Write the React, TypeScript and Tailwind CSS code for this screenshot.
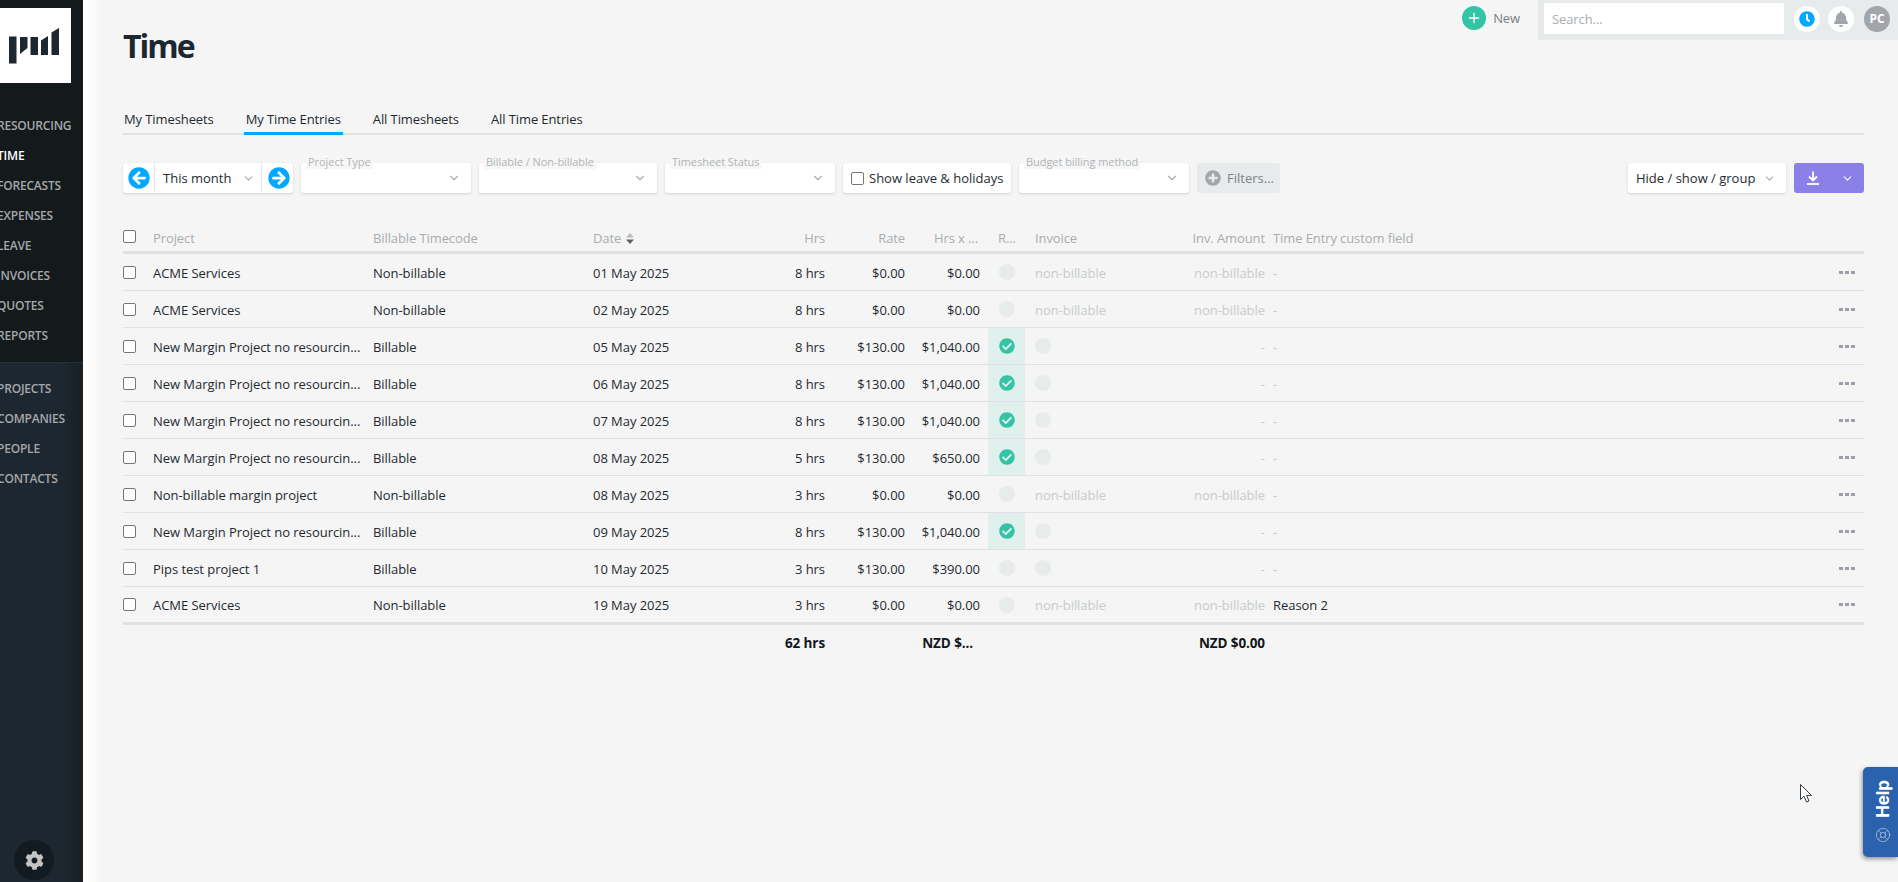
import { ChevronDown, LifeBuoy, Plus } from "lucide-react";
import { FaArrowCircleLeft, FaArrowCircleRight, FaBell, FaCheckCircle, FaClock, FaCog, FaPlusCircle } from "react-icons/fa";

const NAV_TOP = ["Resourcing", "Time", "Forecasts", "Expenses", "Leave", "Invoices", "Quotes", "Reports"];
const NAV_BOTTOM = ["Projects", "Companies", "People", "Contacts"];
const TABS = ["My Timesheets", "My Time Entries", "All Timesheets", "All Time Entries"];

const COLS = "grid grid-cols-[30px_220px_220px_161px_71px_80px_83px_37px_140px_108px_1fr_30px] items-center";

type Entry = { project: string; code: string; date: string; hrs: string; rate: string; total: string; approved?: boolean; custom?: string };

const LONG = "New Margin Project no resourcin...";
const ENTRIES: Entry[] = [
  { project: "ACME Services", code: "Non-billable", date: "01 May 2025", hrs: "8 hrs", rate: "$0.00", total: "$0.00" },
  { project: "ACME Services", code: "Non-billable", date: "02 May 2025", hrs: "8 hrs", rate: "$0.00", total: "$0.00" },
  { project: LONG, code: "Billable", date: "05 May 2025", hrs: "8 hrs", rate: "$130.00", total: "$1,040.00", approved: true },
  { project: LONG, code: "Billable", date: "06 May 2025", hrs: "8 hrs", rate: "$130.00", total: "$1,040.00", approved: true },
  { project: LONG, code: "Billable", date: "07 May 2025", hrs: "8 hrs", rate: "$130.00", total: "$1,040.00", approved: true },
  { project: LONG, code: "Billable", date: "08 May 2025", hrs: "5 hrs", rate: "$130.00", total: "$650.00", approved: true },
  { project: "Non-billable margin project", code: "Non-billable", date: "08 May 2025", hrs: "3 hrs", rate: "$0.00", total: "$0.00" },
  { project: LONG, code: "Billable", date: "09 May 2025", hrs: "8 hrs", rate: "$130.00", total: "$1,040.00", approved: true },
  { project: "Pips test project 1", code: "Billable", date: "10 May 2025", hrs: "3 hrs", rate: "$130.00", total: "$390.00" },
  { project: "ACME Services", code: "Non-billable", date: "19 May 2025", hrs: "3 hrs", rate: "$0.00", total: "$0.00", custom: "Reason 2" },
];

function Checkbox() {
  return <input type="checkbox" className="h-[13px] w-[13px] appearance-none rounded-[2px] border border-[#767676] bg-white" />;
}

function Circle() {
  return <span className="block h-4 w-4 rounded-full bg-[#e8ebec]" />;
}

function FilterSelect({ label, width }: { label: string; width: string }) {
  return (
    <div className={`relative flex h-[30px] items-center justify-end rounded-[3px] bg-white pr-[10px] shadow-[0_1px_3px_rgba(0,0,0,0.14)] ${width}`}>
      <span className="absolute left-[5px] top-[-8px] bg-[#f6f6f6] px-[2px] text-[11px] leading-[14px] tracking-[-0.05px] text-[#b0b4b7]">{label}</span>
      <ChevronDown className="h-[14px] w-[14px] text-[#a9adb0]" />
    </div>
  );
}

function Logo() {
  return (
    <svg viewBox="0 0 71 75" className="h-[75px] w-[71px]" fill="#1c2730">
      <rect x="9" y="28.5" width="7.5" height="27" />
      <polygon points="20,29 27.5,29 27.5,40 20,46" />
      <rect x="30.5" y="29" width="7.5" height="18" />
      <polygon points="41,32.5 48,28 48,47 41,47" />
      <polygon points="51.5,24.5 59,20 59,47 51.5,47" />
    </svg>
  );
}

function Row({ entry, last }: { entry: Entry; last: boolean }) {
  const nb = entry.code === "Non-billable";
  return (
    <div className={`${COLS} ${last ? "h-[38px] border-b-[3px]" : "h-[37px] border-b"} border-[#e0e1e1] tracking-[-0.05px] text-[#1f2a30]`}>
      <div className="flex items-center"><Checkbox /></div>
      <div className="truncate pr-[4px] pt-[3px]">{entry.project}</div>
      <div className="pt-[3px]">{entry.code}</div>
      <div className="pt-[3px]">{entry.date}</div>
      <div className="pt-[3px] text-right">{entry.hrs}</div>
      <div className="pt-[3px] text-right">{entry.rate}</div>
      <div className="pr-2 pt-[3px] text-right">{entry.total}</div>
      <div className={`flex h-full items-center justify-center ${entry.approved ? "bg-[#e0f0ec]" : ""}`}>
        {entry.approved ? <FaCheckCircle className="h-4 w-4 text-[#33c3a5]" /> : <Circle />}
      </div>
      <div className={`pl-[10px] text-[#c8cccc] ${nb ? "pt-[3px]" : ""}`}>{nb ? "non-billable" : <Circle />}</div>
      <div className="pr-2 pt-[3px] text-right text-[#c8cccc]">{nb ? "non-billable" : "-"}</div>
      <div className={`pt-[3px] ${entry.custom ? "" : "text-[#c8cccc]"}`}>{entry.custom ?? "-"}</div>
      <div className="flex justify-end gap-[2px] pr-[9px]">
        <span className="h-[3px] w-[4px] bg-[#9aa0a6]" />
        <span className="h-[3px] w-[4px] bg-[#9aa0a6]" />
        <span className="h-[3px] w-[4px] bg-[#9aa0a6]" />
      </div>
    </div>
  );
}

export default function App() {
  return (
    <div className="relative flex h-[882px] w-full overflow-hidden bg-[#f5f5f5] text-[13px] tracking-[-0.1px] text-[#1f2a30] [font-family:'Open_Sans',sans-serif]">
      {/* Sidebar */}
      <aside className="flex w-[83px] shrink-0 flex-col overflow-hidden bg-[linear-gradient(to_right,#1c2730_75%,#1a2024)]">
        <div className="h-[362px] bg-[#14191c] pt-2">
          <div className="w-[71px] bg-white"><Logo /></div>
          <nav className="mt-[28px] flex flex-col">
            {NAV_TOP.map((n) => (
              <span key={n} className={`-ml-[3px] h-[30px] whitespace-nowrap text-[12px] font-semibold uppercase leading-[30px] tracking-[-0.2px] ${n === "Time" ? "text-white" : "text-[#a5a8aa]"}`}>{n}</span>
            ))}
          </nav>
        </div>
        <nav className="flex flex-1 flex-col border-t border-[#232f38] pt-[11px]">
          {NAV_BOTTOM.map((n) => (
            <span key={n} className="-ml-[3px] h-[30px] whitespace-nowrap text-[12px] font-semibold uppercase leading-[30px] tracking-[-0.2px] text-[#a5a8aa]">{n}</span>
          ))}
          <div className="mb-[2px] ml-[14px] mt-auto flex h-10 w-10 items-center justify-center rounded-full bg-[#141b20]">
            <FaCog className="h-[19px] w-[19px] text-[#c4c4c4]" />
          </div>
        </nav>
      </aside>

      {/* Main */}
      <main className="min-w-0 flex-1 bg-[linear-gradient(to_right,#fff,#f5f5f5_20px)] pl-10 pr-[34px]">
        <header className="flex h-[68px] items-start justify-between">
          <h1 className="pt-[24px] text-[32px] font-bold leading-[44px] tracking-[-2px] text-[#1c2730]">Time</h1>
          <div className="-mr-[34px] flex items-start">
            <div className="mr-[18px] flex h-10 items-center gap-[7px] pb-[4px]">
              <span className="flex h-6 w-6 items-center justify-center rounded-full bg-[#33c3a5]"><Plus className="h-4 w-4 text-white" /></span>
              <span className="pt-[2px] text-[#7a8085]">New</span>
            </div>
            <div className="flex h-10 w-[360px] items-center bg-[#e8ebec] pb-[3px] pl-[6px]">
              <div className="flex h-[31px] w-[240px] items-center bg-white px-2 pt-[2px] text-[#a9adb0]">Search...</div>
              <span className="ml-[10px] flex h-[26px] w-[26px] items-center justify-center rounded-full bg-white"><FaClock className="h-4 w-4 text-[#00a9ff]" /></span>
              <span className="ml-2 flex h-[26px] w-[26px] items-center justify-center rounded-full bg-white"><FaBell className="h-4 w-4 text-[#a2a5aa]" /></span>
              <span className="ml-[10px] flex h-[26px] w-[26px] items-center justify-center rounded-full bg-[#a2a5aa] text-[12px] font-bold text-white">PC</span>
            </div>
          </div>
        </header>

        {/* Tabs */}
        <div className="mt-[37px] h-[30px] border-b-2 border-[#e0e1e1]">
          <div className="-ml-[1px] flex gap-[28px]">
            {TABS.map((t) => (
              <div key={t} className={`h-[30px] px-[2px] leading-[28px] ${t === "My Time Entries" ? "border-b-[3px] border-[#00a9ff]" : ""}`}>{t}</div>
            ))}
          </div>
        </div>

        {/* Filters */}
        <div className="mt-[28px] flex items-center gap-2 tracking-normal">
          <div className="flex h-[30px] w-[170px] items-center rounded-[3px] bg-white shadow-[0_1px_3px_rgba(0,0,0,0.14)]">
            <div className="flex h-full w-[32px] items-center justify-center border-r border-[#e8e8e8]"><FaArrowCircleLeft className="h-[22px] w-[22px] text-[#00a9ff]" /></div>
            <div className="flex h-full w-[107px] items-center justify-between border-r border-[#e8e8e8] pl-[8px] pr-[6px]">
              <span className="pt-[2px]">This month</span>
              <ChevronDown className="h-[13px] w-[13px] text-[#a9adb0]" />
            </div>
            <div className="flex h-full flex-1 items-center justify-center pl-[2px]"><FaArrowCircleRight className="h-[22px] w-[22px] text-[#00a9ff]" /></div>
          </div>
          <FilterSelect label="Project Type" width="w-[170px]" />
          <FilterSelect label="Billable / Non-billable" width="w-[178px]" />
          <FilterSelect label="Timesheet Status" width="w-[170px]" />
          <div className="flex h-[30px] w-[168px] items-center gap-[5px] rounded-[3px] bg-white pl-2 shadow-[0_1px_3px_rgba(0,0,0,0.14)]">
            <Checkbox />
            <span className="whitespace-nowrap pt-[2px]">Show leave &amp; holidays</span>
          </div>
          <FilterSelect label="Budget billing method" width="w-[170px]" />
          <div className="flex h-[30px] w-[83px] items-center gap-[6px] rounded-[3px] bg-[#e8ebec] pl-2 text-[#7c8286]">
            <FaPlusCircle className="h-4 w-4 text-[#a2a5aa]" />
            <span className="pt-[2px]">Filters...</span>
          </div>
          <div className="ml-auto flex h-[30px] w-[158px] items-center justify-between rounded-[3px] bg-white pl-2 pr-[10px] shadow-[0_1px_3px_rgba(0,0,0,0.14)]">
            <span className="whitespace-nowrap pt-[2px]">Hide / show / group</span>
            <ChevronDown className="h-[13px] w-[13px] text-[#a9adb0]" />
          </div>
          <div className="flex h-[30px] w-[70px] items-center justify-between rounded-[3px] bg-[#8b80e8] pl-[13px] pr-[10px] text-white">
            <svg viewBox="0 0 12 14" className="h-[14px] w-3" fill="none" stroke="currentColor" strokeWidth="1.8">
              <path d="M6 0.5V9M2 5.5L6 9.5L10 5.5" />
              <path d="M0 13H12" />
            </svg>
            <ChevronDown className="h-[13px] w-[13px]" />
          </div>
        </div>

        {/* Table */}
        <div className={`${COLS} mt-[29px] h-[32px] border-b-[3px] border-[#e0e1e1] text-[#a9adb0]`}>
          <div className="flex items-center"><Checkbox /></div>
          <div className="pt-[4px]">Project</div>
          <div className="pt-[4px]">Billable Timecode</div>
          <div className="flex items-center gap-[5px] pt-[4px]">
            Date
            <svg viewBox="0 0 8 11" className="h-[11px] w-2"><path d="M4 0L8 4.5H0Z" fill="#b8bcbe" /><path d="M4 11L8 6.5H0Z" fill="#5c6368" /></svg>
          </div>
          <div className="pt-[4px] text-right">Hrs</div>
          <div className="pt-[4px] text-right">Rate</div>
          <div className="pr-[10px] pt-[4px] text-right">Hrs x ...</div>
          <div className="pl-[10px] pt-[4px]">R...</div>
          <div className="pl-[10px] pt-[4px]">Invoice</div>
          <div className="whitespace-nowrap pr-2 pt-[4px] text-right">Inv. Amount</div>
          <div className="pt-[4px]">Time Entry custom field</div>
          <div />
        </div>
        {ENTRIES.map((e, i) => <Row key={i} entry={e} last={i === ENTRIES.length - 1} />)}
        <div className={`${COLS} h-[37px] text-[13.5px] font-bold text-[#12181c]`}>
          <div /><div /><div /><div />
          <div className="text-right">62 hrs</div>
          <div />
          <div className="pr-[15px] text-right">NZD $...</div>
          <div /><div />
          <div className="whitespace-nowrap pr-2 text-right">NZD $0.00</div>
        </div>
      </main>

      {/* Help tab */}
      <div className="absolute right-0 top-[767px] flex h-[90px] w-[35px] flex-col items-center justify-end gap-[9px] rounded-l-[5px] bg-[#2a62ad] pb-[14px] pl-[5px] text-white shadow-[-1px_2px_4px_rgba(0,0,0,0.4)]">
        <span className="rotate-180 text-[17px] font-bold leading-none [font-family:'Inter',sans-serif] [writing-mode:vertical-rl]">Help</span>
        <LifeBuoy className="h-4 w-4 opacity-70" strokeWidth={1} />
      </div>

      {/* Mouse cursor */}
      <svg viewBox="0 0 12 19" className="absolute left-[1800px] top-[784px] h-[19px] w-3" fill="#fff" stroke="#1c2730" strokeWidth="0.9">
        <path d="M0.5 0.5V15.5L4 12.2L6.5 18L9 17L6.6 11.4H11.5Z" />
      </svg>
    </div>
  );
}
